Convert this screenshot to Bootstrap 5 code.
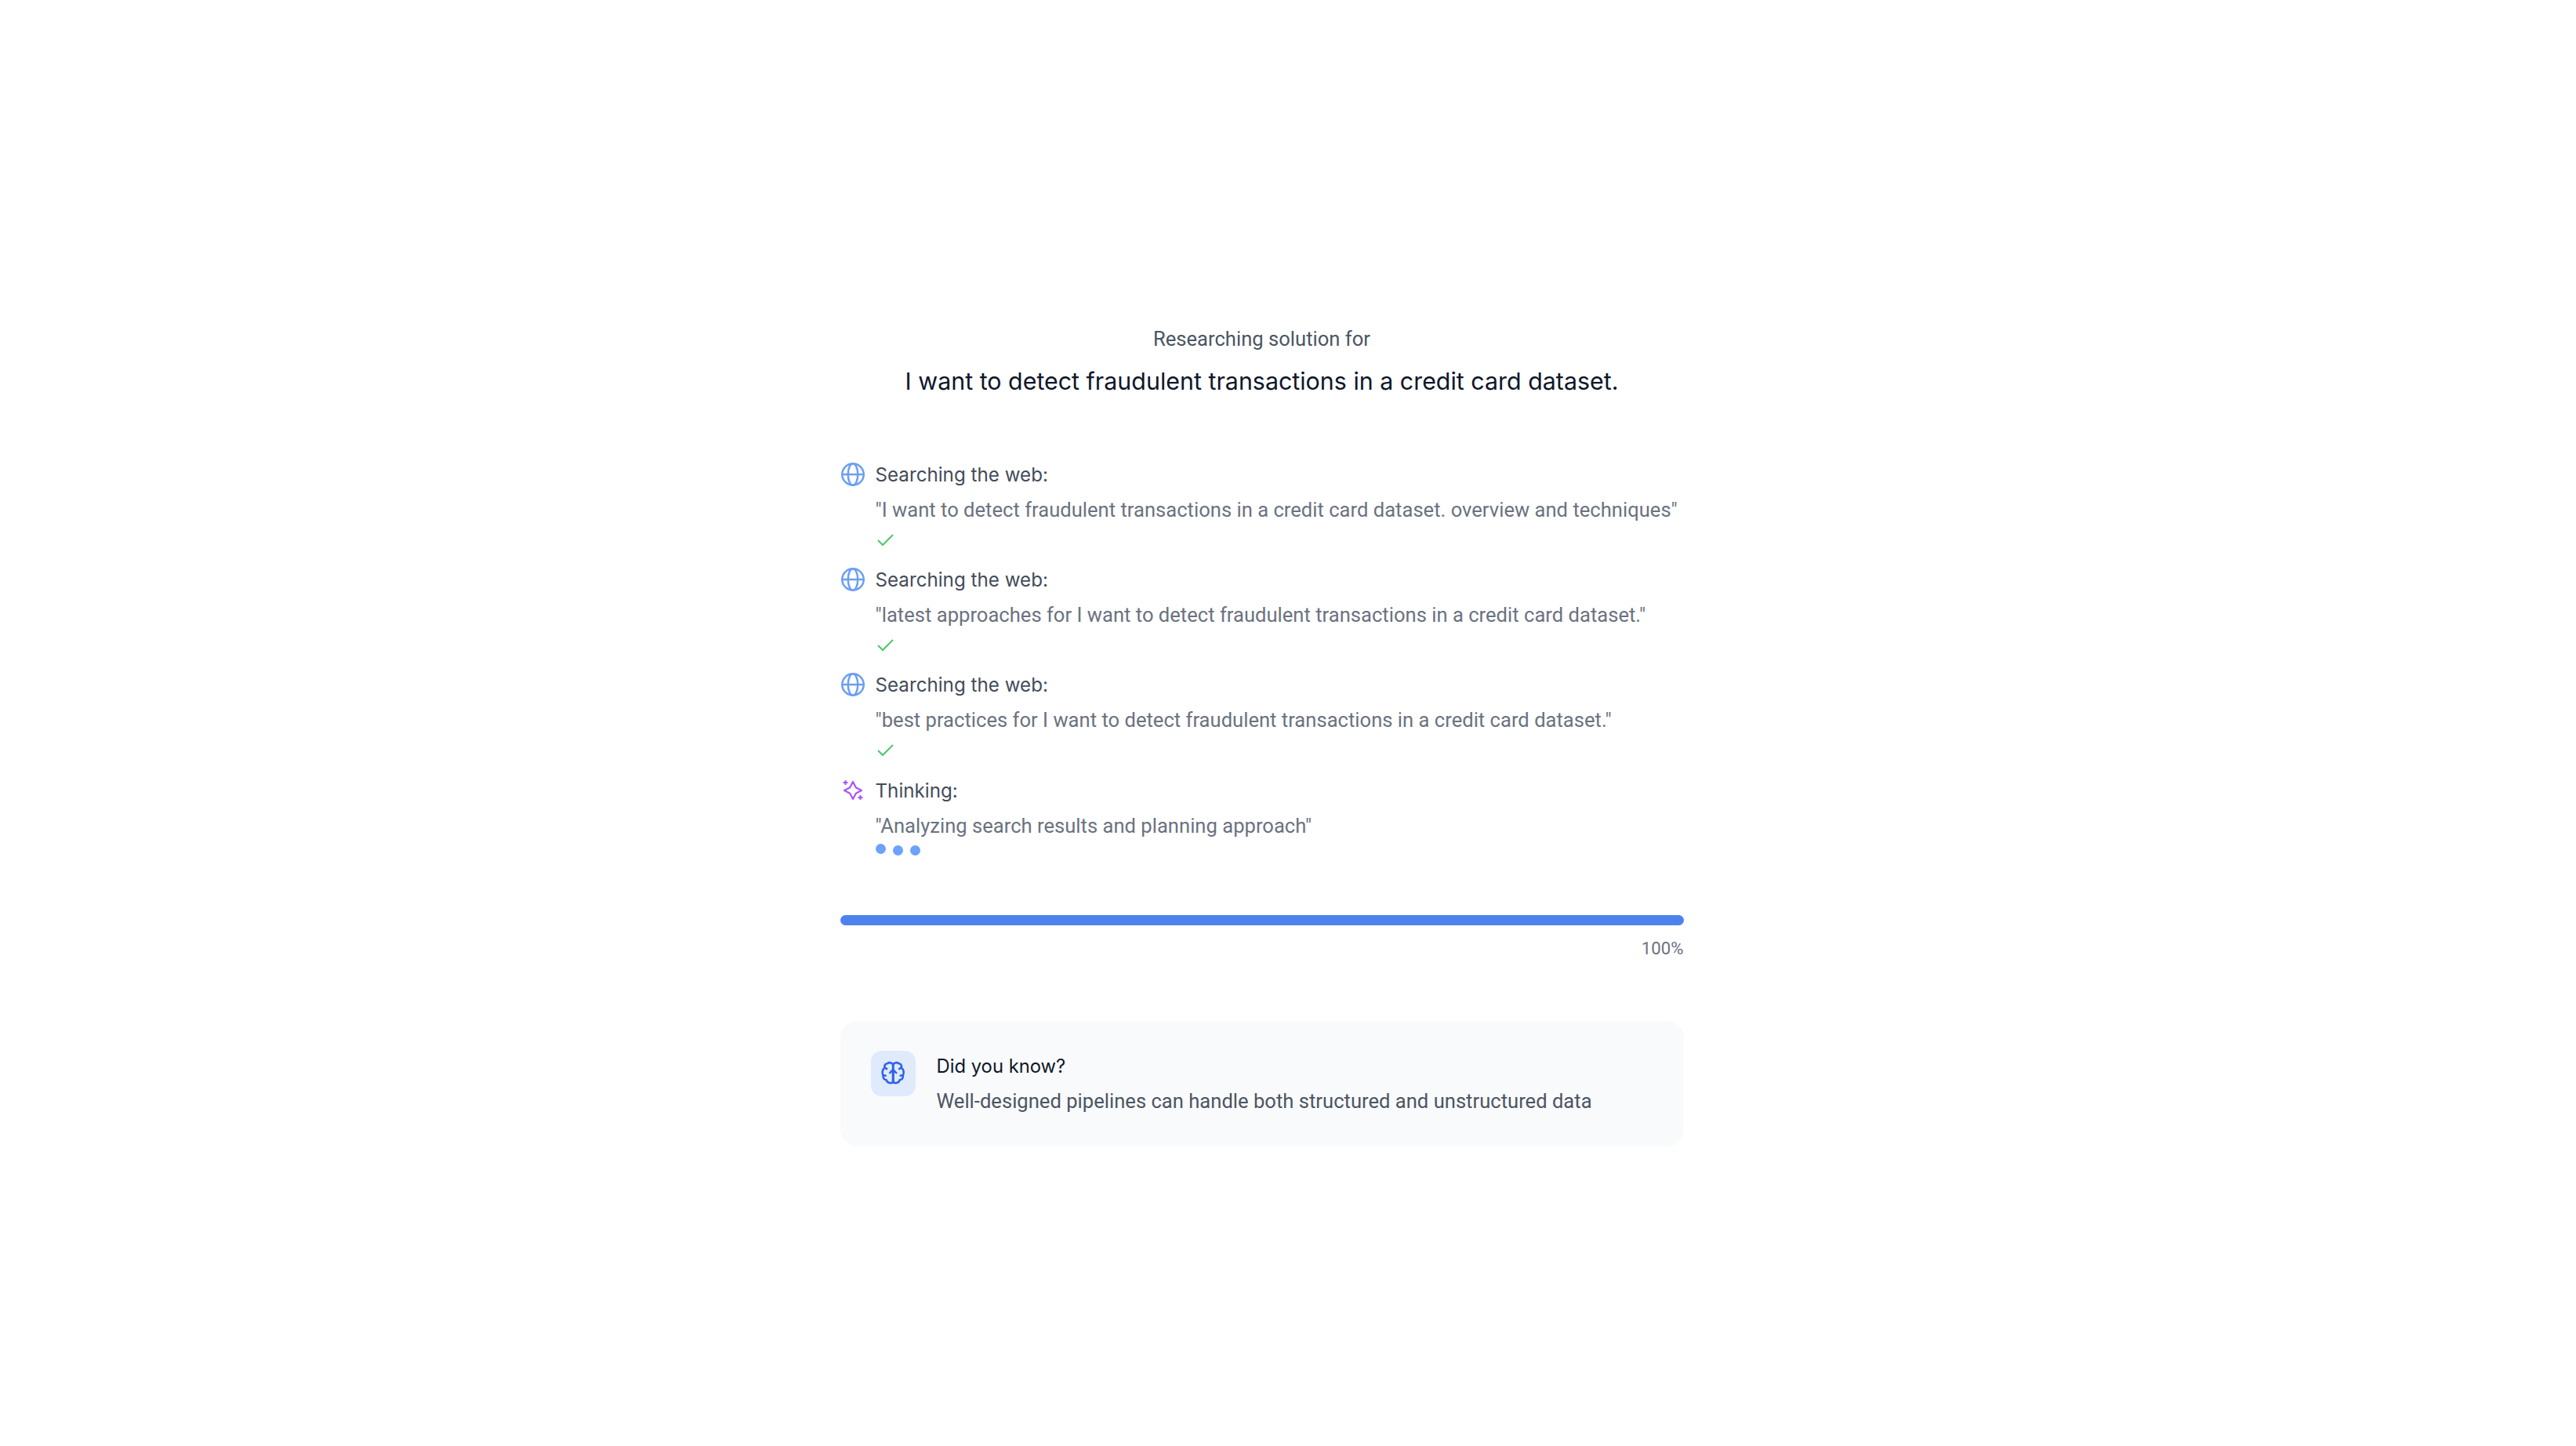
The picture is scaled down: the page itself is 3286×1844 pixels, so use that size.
<!DOCTYPE html>
<html lang="en">
<head>
  <meta charset="UTF-8"/>
  <title>Researching solution</title>
  <link rel="stylesheet" href="https://cdn.jsdelivr.net/npm/bootstrap@5.3.0/dist/css/bootstrap.min.css"/>
  <style>
    body { font-family: Roboto, sans-serif; background-color: #fff; padding-right: 67px; }
    .research-wrap { width: 1076px; margin: 0 auto; padding-top: 412px; }
    .research-over { font-size: 25.6px; line-height: 40px; color: #4b5563; }
    .research-title { font-family: Inter, Roboto, sans-serif; font-size: 30.4px; line-height: 44px; color: #0f172a; margin-top: 12px; margin-bottom: 75px; }
    .step-row { column-gap: 14px; margin-bottom: 22.7px; }
    .step-icon { width: 30px; height: 30px; flex: none; margin: 7px 0 0 1px; }
    .step-label { font-family: Inter, Roboto, sans-serif; font-size: 24.2px; line-height: 46px; color: #434c5a; }
    .step-quote { font-size: 25.6px; line-height: 40px; margin-top: 1px; color: #6b7280; white-space: nowrap; }
    .step-check { display: block; width: 24px; height: 24px; margin: 5.5px 0 -5px 0; }
    .dot-row { column-gap: 9px; margin-top: 5px; }
    .dot-item { width: 13px; height: 13px; border-radius: 50%; background-color: #6ba3f8; }
    .dot-up { transform: translateY(-2px); }
    .bar-track { height: 13px; border-radius: 7px; margin-top: 76px; background-color: #e5e7eb; }
    .bar-fill { height: 100%; border-radius: 7px; background-color: #4d82ee; }
    .bar-pct { font-size: 22.2px; line-height: 30px; color: #6b7280; margin-top: 14px; }
    .tip-box { background-color: #f9fafb; border-radius: 22px; padding: 38px 39px; height: 160px; margin-top: 78px; column-gap: 27px; }
    .tip-icon { width: 57px; height: 58px; flex: none; border-radius: 14px; background-color: #dfeafc; }
    .tip-title { font-family: Inter, Roboto, sans-serif; font-size: 23.8px; line-height: 40px; color: #0f172a; }
    .tip-text { font-size: 25.6px; line-height: 40px; margin-top: 4px; color: #4b5563; white-space: nowrap; }
  </style>
</head>
<body>
  <main class="research-wrap">
    <div class="text-center">
      <div class="research-over">Researching solution for</div>
      <div class="research-title">I want to detect fraudulent transactions in a credit card dataset.</div>
    </div>

    <div class="d-flex step-row">
      <svg class="step-icon" viewBox="0 0 24 24" fill="none" stroke="#6b9ff5" stroke-width="2"><circle cx="12" cy="12" r="11"/><ellipse cx="12" cy="12" rx="5" ry="11"/><path d="M1 12h22"/></svg>
      <div>
        <div class="step-label">Searching the web:</div>
        <div class="step-quote">"I want to detect fraudulent transactions in a credit card dataset. overview and techniques"</div>
        <svg class="step-check" viewBox="0 0 24 24" fill="none" stroke="#4cc76a" stroke-width="2"><path d="M3 13l6 6L22 6"/></svg>
      </div>
    </div>
    <div class="d-flex step-row">
      <svg class="step-icon" viewBox="0 0 24 24" fill="none" stroke="#6b9ff5" stroke-width="2"><circle cx="12" cy="12" r="11"/><ellipse cx="12" cy="12" rx="5" ry="11"/><path d="M1 12h22"/></svg>
      <div>
        <div class="step-label">Searching the web:</div>
        <div class="step-quote">"latest approaches for I want to detect fraudulent transactions in a credit card dataset."</div>
        <svg class="step-check" viewBox="0 0 24 24" fill="none" stroke="#4cc76a" stroke-width="2"><path d="M3 13l6 6L22 6"/></svg>
      </div>
    </div>
    <div class="d-flex step-row">
      <svg class="step-icon" viewBox="0 0 24 24" fill="none" stroke="#6b9ff5" stroke-width="2"><circle cx="12" cy="12" r="11"/><ellipse cx="12" cy="12" rx="5" ry="11"/><path d="M1 12h22"/></svg>
      <div>
        <div class="step-label">Searching the web:</div>
        <div class="step-quote">"best practices for I want to detect fraudulent transactions in a credit card dataset."</div>
        <svg class="step-check" viewBox="0 0 24 24" fill="none" stroke="#4cc76a" stroke-width="2"><path d="M3 13l6 6L22 6"/></svg>
      </div>
    </div>
    <div class="d-flex step-row">
      <svg class="step-icon" viewBox="-2 -2 30 30" fill="none" stroke="#a855f7" stroke-width="2.200" stroke-linejoin="round"><path d="M13 2L16.800 9.200L24 13L16.800 16.800L13 24L9.200 16.800L2 13L9.200 9.200z"/><path d="M3.500 0v6M.5 3h6M22.500 19v6M19.500 22h6" stroke-width="2"/></svg>
      <div>
        <div class="step-label">Thinking:</div>
        <div class="step-quote">"Analyzing search results and planning approach"</div>
        <div class="d-flex dot-row">
          <span class="dot-item dot-up"></span>
          <span class="dot-item"></span>
          <span class="dot-item"></span>
        </div>
      </div>
    </div>

    <div class="bar-track"><div class="bar-fill" style="width: 100%"></div></div>
    <div class="bar-pct text-end">100%</div>

    <div class="tip-box d-flex">
      <div class="tip-icon d-flex align-items-center justify-content-center">
        <svg width="32.400" height="32.400" viewBox="-1.200 -1.200 32.400 32.400" fill="none" stroke="#2f62ea" stroke-width="2.600" stroke-linecap="round" stroke-linejoin="round">
          <path d="M15 5C14 2 10 1 8 3C5 3 3.500 6 4.500 8.500C1.500 10 .5 15 2.500 18C1.500 21 3.500 24 6.500 24C7 27.500 12 29 15 27z"/>
          <path d="M15 5C16 2 20 1 22 3C25 3 26.500 6 25.500 8.500C28.500 10 29.500 15 27.500 18C28.500 21 26.500 24 23.500 24C23 27.500 18 29 15 27z"/>
          <path d="M15 27V11M11 15l4-4 4 4M4.500 8.500L7 10M25.500 8.500L23 10M2.500 18L5.500 18.500M27.500 18L24.500 18.500"/>
        </svg>
      </div>
      <div>
        <div class="tip-title">Did you know?</div>
        <div class="tip-text">Well-designed pipelines can handle both structured and unstructured data</div>
      </div>
    </div>
  </main>
  <script src="https://cdn.jsdelivr.net/npm/bootstrap@5.3.0/dist/js/bootstrap.bundle.min.js"></script>
</body>
</html>
